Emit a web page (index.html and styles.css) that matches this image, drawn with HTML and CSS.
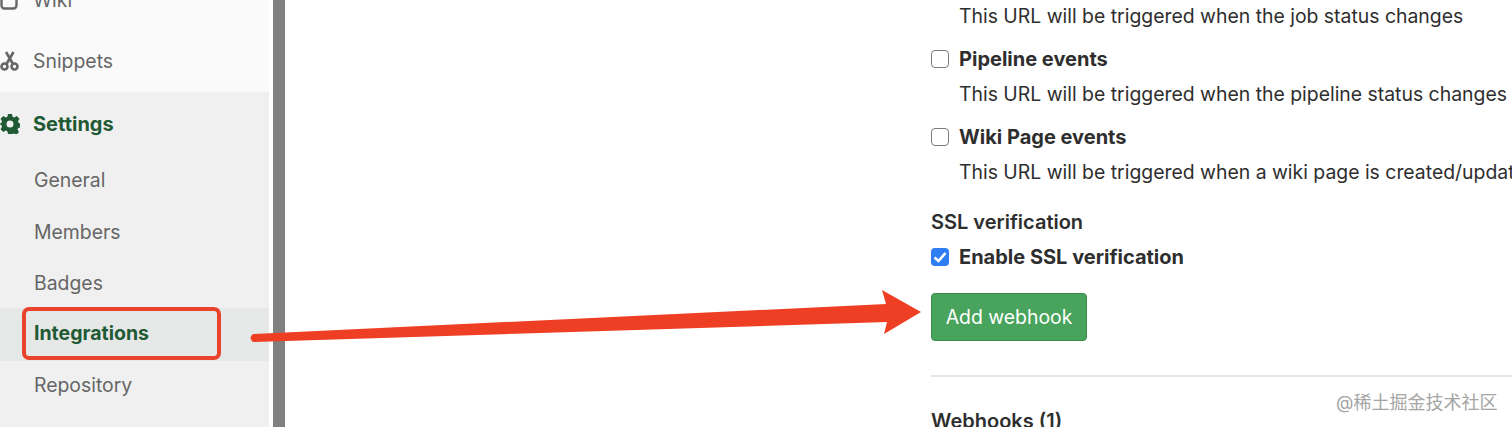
FILE: index.html
```html
<!DOCTYPE html>
<html lang="en">
<head>
    <meta charset="UTF-8">
    <title>Integrations</title>
    <link rel="stylesheet" href="styles.css">
</head>
<body>
    <div class="page">
        <aside class="sidebar">
            <a class="nav-item nav-item-first">
                <svg class="nav-icon" viewBox="0 0 20 20"><rect x="1.5" y="1.5" width="15" height="17" rx="3" fill="none" stroke="#666" stroke-width="2.4"/></svg>
                <span>Wiki</span>
            </a>
            <a class="nav-item">
                <svg class="nav-icon" viewBox="0 0 20 20"><g fill="none" stroke="#666" stroke-width="2.6"><circle cx="4.5" cy="15.5" r="3"/><circle cx="14.500" cy="15.500" r="3"/><path d="M6.500 13 13.500 1M13 13 6 1"/></g></svg>
                <span>Snippets</span>
            </a>
            <div class="nav-group">
                <a class="nav-item nav-item-active">
                    <svg class="nav-icon" viewBox="0 0 20 20"><path fill="#1f5a35" fill-rule="evenodd" d="M8 0h4l.6 2.800 1.600.7L16.700 2l2.800 2.800-1.500 2.500.7 1.700 1.300.6v3.800l-1.800.6-.7 1.600 1.500 2.500-2.800 2.800-2.500-1.500-1.600.7L12 20H8l-.6-2.800-1.600-.7L3.300 18 .5 15.200 2 12.700 1.300 11 0 10.400V9.600l1.300-.6L2 7.300.5 4.800 3.300 2l2.500 1.500 1.600-.7zM10 6.500a3.500 3.500 0 1 0 0 7 3.500 3.500 0 0 0 0-7z"/></svg>
                    <span>Settings</span>
                </a>
                <ul class="subnav">
                    <li class="subnav-first">General</li>
                    <li>Members</li>
                    <li class="subnav-before-active">Badges</li>
                    <li class="subnav-active">Integrations</li>
                    <li class="subnav-after-active">Repository</li>
                </ul>
            </div>
        </aside>
        <div class="scrollbar"></div>
        <main class="content">
            <p class="hint first-hint">This URL will be triggered when the job status changes</p>
            <label class="check-row"><span class="box"></span>Pipeline events</label>
            <p class="hint">This URL will be triggered when the pipeline status changes</p>
            <label class="check-row"><span class="box"></span>Wiki Page events</label>
            <p class="hint">This URL will be triggered when a wiki page is created/updated</p>
            <h4 class="ssl-title">SSL verification</h4>
            <label class="check-row ssl-row">
                <span class="box box-checked"><svg viewBox="0 0 18 18"><path d="M3.500 9.500 7.500 13 14.500 5" fill="none" stroke="#fff" stroke-width="2.600"/></svg></span>
                Enable SSL verification
            </label>
            <button class="add-btn">Add webhook</button>
            <hr class="divider">
            <h4 class="webhooks-title">Webhooks (1)</h4>
        </main>
    </div>

    <!-- annotations drawn on top of the screenshot -->
    <div class="red-box"></div>
    <svg class="arrow" width="1512" height="427" viewBox="0 0 1512 427">
        <path d="M253 334 886 304 882 290 921 312 884 334 887 322 253 342Q248 338 253 334Z" fill="#ee3f24"/>
    </svg>
    <div class="watermark">@稀土掘金技术社区</div>
</body>
</html>
```

FILE: styles.css
```css
* {
    margin: 0;
    padding: 0;
    box-sizing: border-box;
}

html, body {
    height: 427px;
    overflow: hidden;
    background: #fff;
}

body {
    position: relative;
    font-family: Inter, "Liberation Sans", "Noto Sans CJK SC", sans-serif;
    font-size: 19.4px;
    color: #2e2e2e;
}

.page {
    display: flex;
    align-items: flex-start;
    height: 427px;
}

.sidebar {
    width: 269px;
    flex-shrink: 0;
    margin-top: -31px;
    background: #fafafa;
    color: #666;
}

.nav-item {
    display: flex;
    align-items: center;
    height: 62px;
    gap: 13px;
}

.nav-item-first {
    height: 61px;
}

.nav-icon {
    width: 20px;
    height: 20px;
    flex-shrink: 0;
}

.nav-group {
    background: #f0f0f0;
    height: 335px;
}

.nav-item-active {
    height: 63px;
    color: #1f5a35;
    font-size: 20px;
    font-weight: 700;
}

.subnav {
    list-style: none;
}

.subnav li {
    height: 51px;
    line-height: 51px;
    padding-left: 34px;
}

.subnav .subnav-first {
    height: 52px;
}

.subnav .subnav-before-active {
    height: 50px;
}

.subnav .subnav-active {
    color: #1f5a35;
    font-size: 19.5px;
    font-weight: 700;
    background: #e6e7e7;
    height: 53px;
}

.subnav .subnav-after-active {
    line-height: 49px;
}

.scrollbar {
    width: 12px;
    height: 427px;
    margin-left: 4px;
    flex-shrink: 0;
    background: #808080;
}

.content {
    margin-left: 646px;
    width: 581px;
    flex-shrink: 0;
    white-space: nowrap;
}

.hint {
    margin-left: 28px;
    height: 36px;
    line-height: 28px;
}

.first-hint {
    height: 38px;
    line-height: 33px;
}

.check-row {
    display: flex;
    align-items: center;
    gap: 10px;
    height: 42px;
    font-size: 20px;
    font-weight: 700;
}

.box {
    width: 18px;
    height: 18px;
    flex-shrink: 0;
    background: #fff;
    border: 1.5px solid #7b7b7b;
    border-radius: 4px;
}

.box-checked {
    background: #2f7df2;
    border: none;
}

.box-checked svg {
    display: block;
}

.ssl-title {
    font-size: 20px;
    font-weight: 600;
    margin-top: 13px;
    height: 30px;
    line-height: 30px;
}

.ssl-row {
    height: 40px;
}

.add-btn {
    display: block;
    width: 156px;
    height: 48px;
    margin-top: 16px;
    background: #48a35c;
    border: 1px solid #388c4c;
    border-radius: 4px;
    color: #fff;
    font: inherit;
}

.divider {
    border: 0;
    border-top: 2px solid #e6e6e6;
    margin-top: 34px;
}

.webhooks-title {
    font-size: 20px;
    font-weight: 600;
    margin-top: 32px;
}

.red-box {
    position: absolute;
    left: 22px;
    top: 307px;
    width: 199px;
    height: 53px;
    border: 4px solid #e8432b;
    border-radius: 7px;
}

.arrow {
    position: absolute;
    left: 0;
    top: 0;
}

.watermark {
    position: absolute;
    left: 1336px;
    top: 388px;
    font-size: 18px;
    color: #a5a5a5;
}
```
